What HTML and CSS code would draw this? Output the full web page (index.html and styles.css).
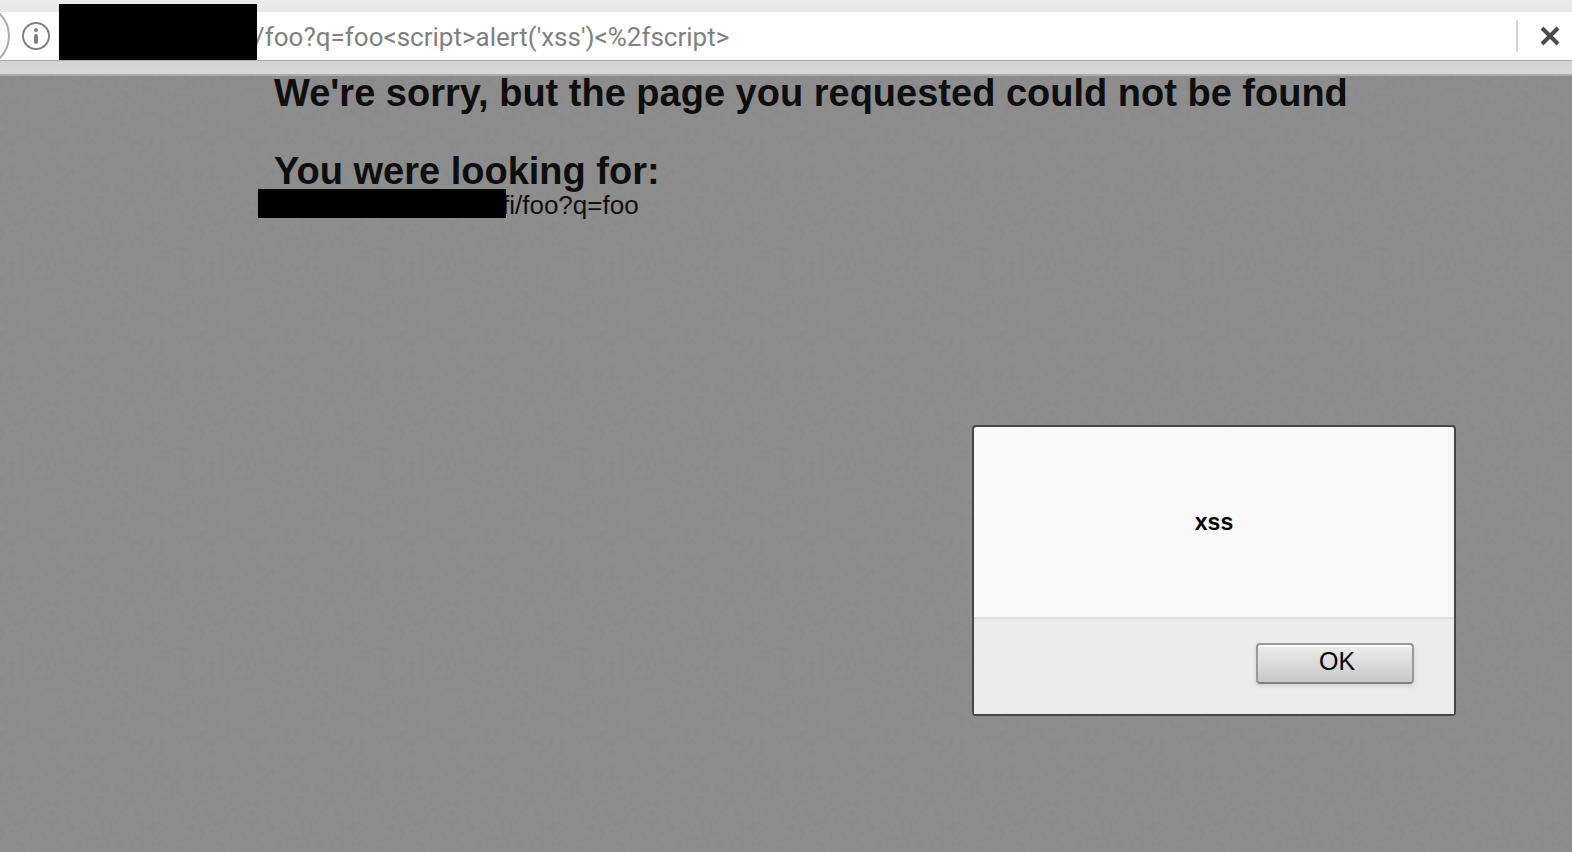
FILE: index.html
```
<!DOCTYPE html>
<html lang="en">
<head>
    <meta charset="UTF-8">
    <meta name="viewport" content="width=device-width, initial-scale=1.0">
    <title>Page not found</title>
    <link rel="stylesheet" href="styles.css">
</head>
<body>
    <header class="toolbar">
        <div class="url-bar">
            <div class="back-button"></div>
            <button class="info-btn" aria-label="Site information">
                <svg width="28" height="28" viewBox="0 0 28 28">
                    <circle cx="14" cy="14" r="13" fill="none" stroke="#808080" stroke-width="2"/>
                    <circle cx="14" cy="8" r="2" fill="#808080"/>
                    <rect x="12" y="12" width="4" height="10" rx="2" fill="#808080"/>
                </svg>
            </button>
            <div class="redacted redacted-host"></div>
            <input class="url-input" type="text" aria-label="Address" value="/foo?q=foo&lt;script&gt;alert('xss')&lt;%2fscript&gt;">
            <button class="stop-btn" aria-label="Stop">
                <svg width="20" height="20" viewBox="0 0 20 20">
                    <path d="M2 2L18 18M18 2L2 18" stroke="#4c4c4c" stroke-width="4"/>
                </svg>
            </button>
        </div>
    </header>

    <main class="page">
        <div class="content">
            <h1>We're sorry, but the page you requested could not be found</h1>
            <h2>You were looking for:</h2>
            <p class="address"><span class="redacted redacted-address"></span><span>fi/foo?q=foo</span></p>
        </div>
    </main>

    <dialog class="alert" open aria-labelledby="alert-text">
        <div class="alert-body">
            <p id="alert-text">xss</p>
        </div>
        <form class="alert-footer" method="dialog">
            <button class="ok-btn">OK</button>
        </form>
    </dialog>
</body>
</html>
```

FILE: styles.css
```
:root {
    --page: #8a8a8a;
    --ink: #0e0e0e;
    --url: #808080;
}

* {
    margin: 0;
    padding: 0;
    box-sizing: border-box;
}

body {
    min-height: 100vh;
    display: flex;
    flex-direction: column;
    position: relative;
    overflow: hidden;
    background-color: var(--page);
    color: var(--ink);
    font-family: "Liberation Sans", Arial, sans-serif;
}

button {
    border: none;
    background: none;
}

/* Sits on top of the text beside it */
.redacted {
    position: relative;
    z-index: 1;
    background-color: #000;
}

/* Browser toolbar */
.toolbar {
    padding: 12px 0 13px;
    background: linear-gradient(#ebebeb, #e7e7e7 12px, #d3d3d3 60px, #d8d8d8);
    border-bottom: 2px solid #acacac;
}

.url-bar {
    height: 49px;
    display: flex;
    align-items: center;
    position: relative;
    overflow-x: clip;
    background-color: #fff;
    border-bottom: 1px solid #a9a9a9;
}

.back-button {
    position: absolute;
    left: -54px;
    top: -8px;
    width: 64px;
    height: 64px;
    border: 2px solid #acacac;
    border-radius: 50%;
    background-color: #fafafa;
    clip-path: inset(8px 0);
}

.info-btn {
    width: 28px;
    height: 28px;
    margin-left: 22px;
}

.info-btn svg,
.stop-btn svg {
    display: block;
}

.redacted-host {
    align-self: flex-end;
    width: 198px;
    height: 56px;
    margin: 0 -3px 0 9px;
}

.url-input {
    flex: 1;
    min-width: 0;
    height: 48px;
    padding-top: 2px;
    border: none;
    outline: none;
    background: transparent;
    color: var(--url);
    font-family: Roboto, sans-serif;
    font-size: 26px;
}

.stop-btn {
    height: 32px;
    padding: 0 12px 0 22px;
    border-left: 2px solid #d2d2d2;
}

/* Error page */
.page {
    flex: 1;
    padding: 0 40px 0 258px;
    background-image: url("data:image/svg+xml,%3Csvg xmlns='http://www.w3.org/2000/svg' width='200' height='200'%3E%3Cfilter id='n'%3E%3CfeTurbulence type='fractalNoise' baseFrequency='.2' numOctaves='3' stitchTiles='stitch'/%3E%3CfeColorMatrix type='saturate' values='0'/%3E%3C/filter%3E%3Crect width='200' height='200' filter='url(%23n)' opacity='.08'/%3E%3C/svg%3E");
}

h1,
h2 {
    padding-left: 16px;
    font-size: 38px;
    line-height: 34px;
    font-weight: bold;
}

h2 {
    margin-top: 44px;
}

.address {
    display: flex;
    align-items: flex-start;
    margin-top: 1px;
    font-size: 26px;
    line-height: 32px;
}

.redacted-address {
    width: 248px;
    height: 29px;
    margin-right: -4px;
}

/* Alert box */
.alert {
    position: absolute;
    top: 425px;
    left: auto;
    right: 116px;
    width: 484px;
    border: 2px solid #464646;
    border-radius: 4px;
    background-color: #f9f9f9;
    color: #000;
}

.alert-body {
    padding: 80px 20px;
    text-align: center;
    font-size: 23px;
    line-height: 30px;
    font-weight: bold;
}

.alert-footer {
    display: flex;
    justify-content: flex-end;
    padding: 24px 40px 30px;
    border-top: 2px solid #dedede;
    background-color: #ebebeb;
}

.ok-btn {
    width: 158px;
    height: 41px;
    padding: 0 0 4px 4px;
    border: 2px solid #999;
    border-bottom-color: #808080;
    border-radius: 4px;
    background: linear-gradient(#ededed, #c8c8c8);
    box-shadow: inset 0 2px #fafafa, 0 2px 4px rgba(0, 0, 0, 0.12);
    color: #000;
    font-family: inherit;
    font-size: 25px;
}
```
